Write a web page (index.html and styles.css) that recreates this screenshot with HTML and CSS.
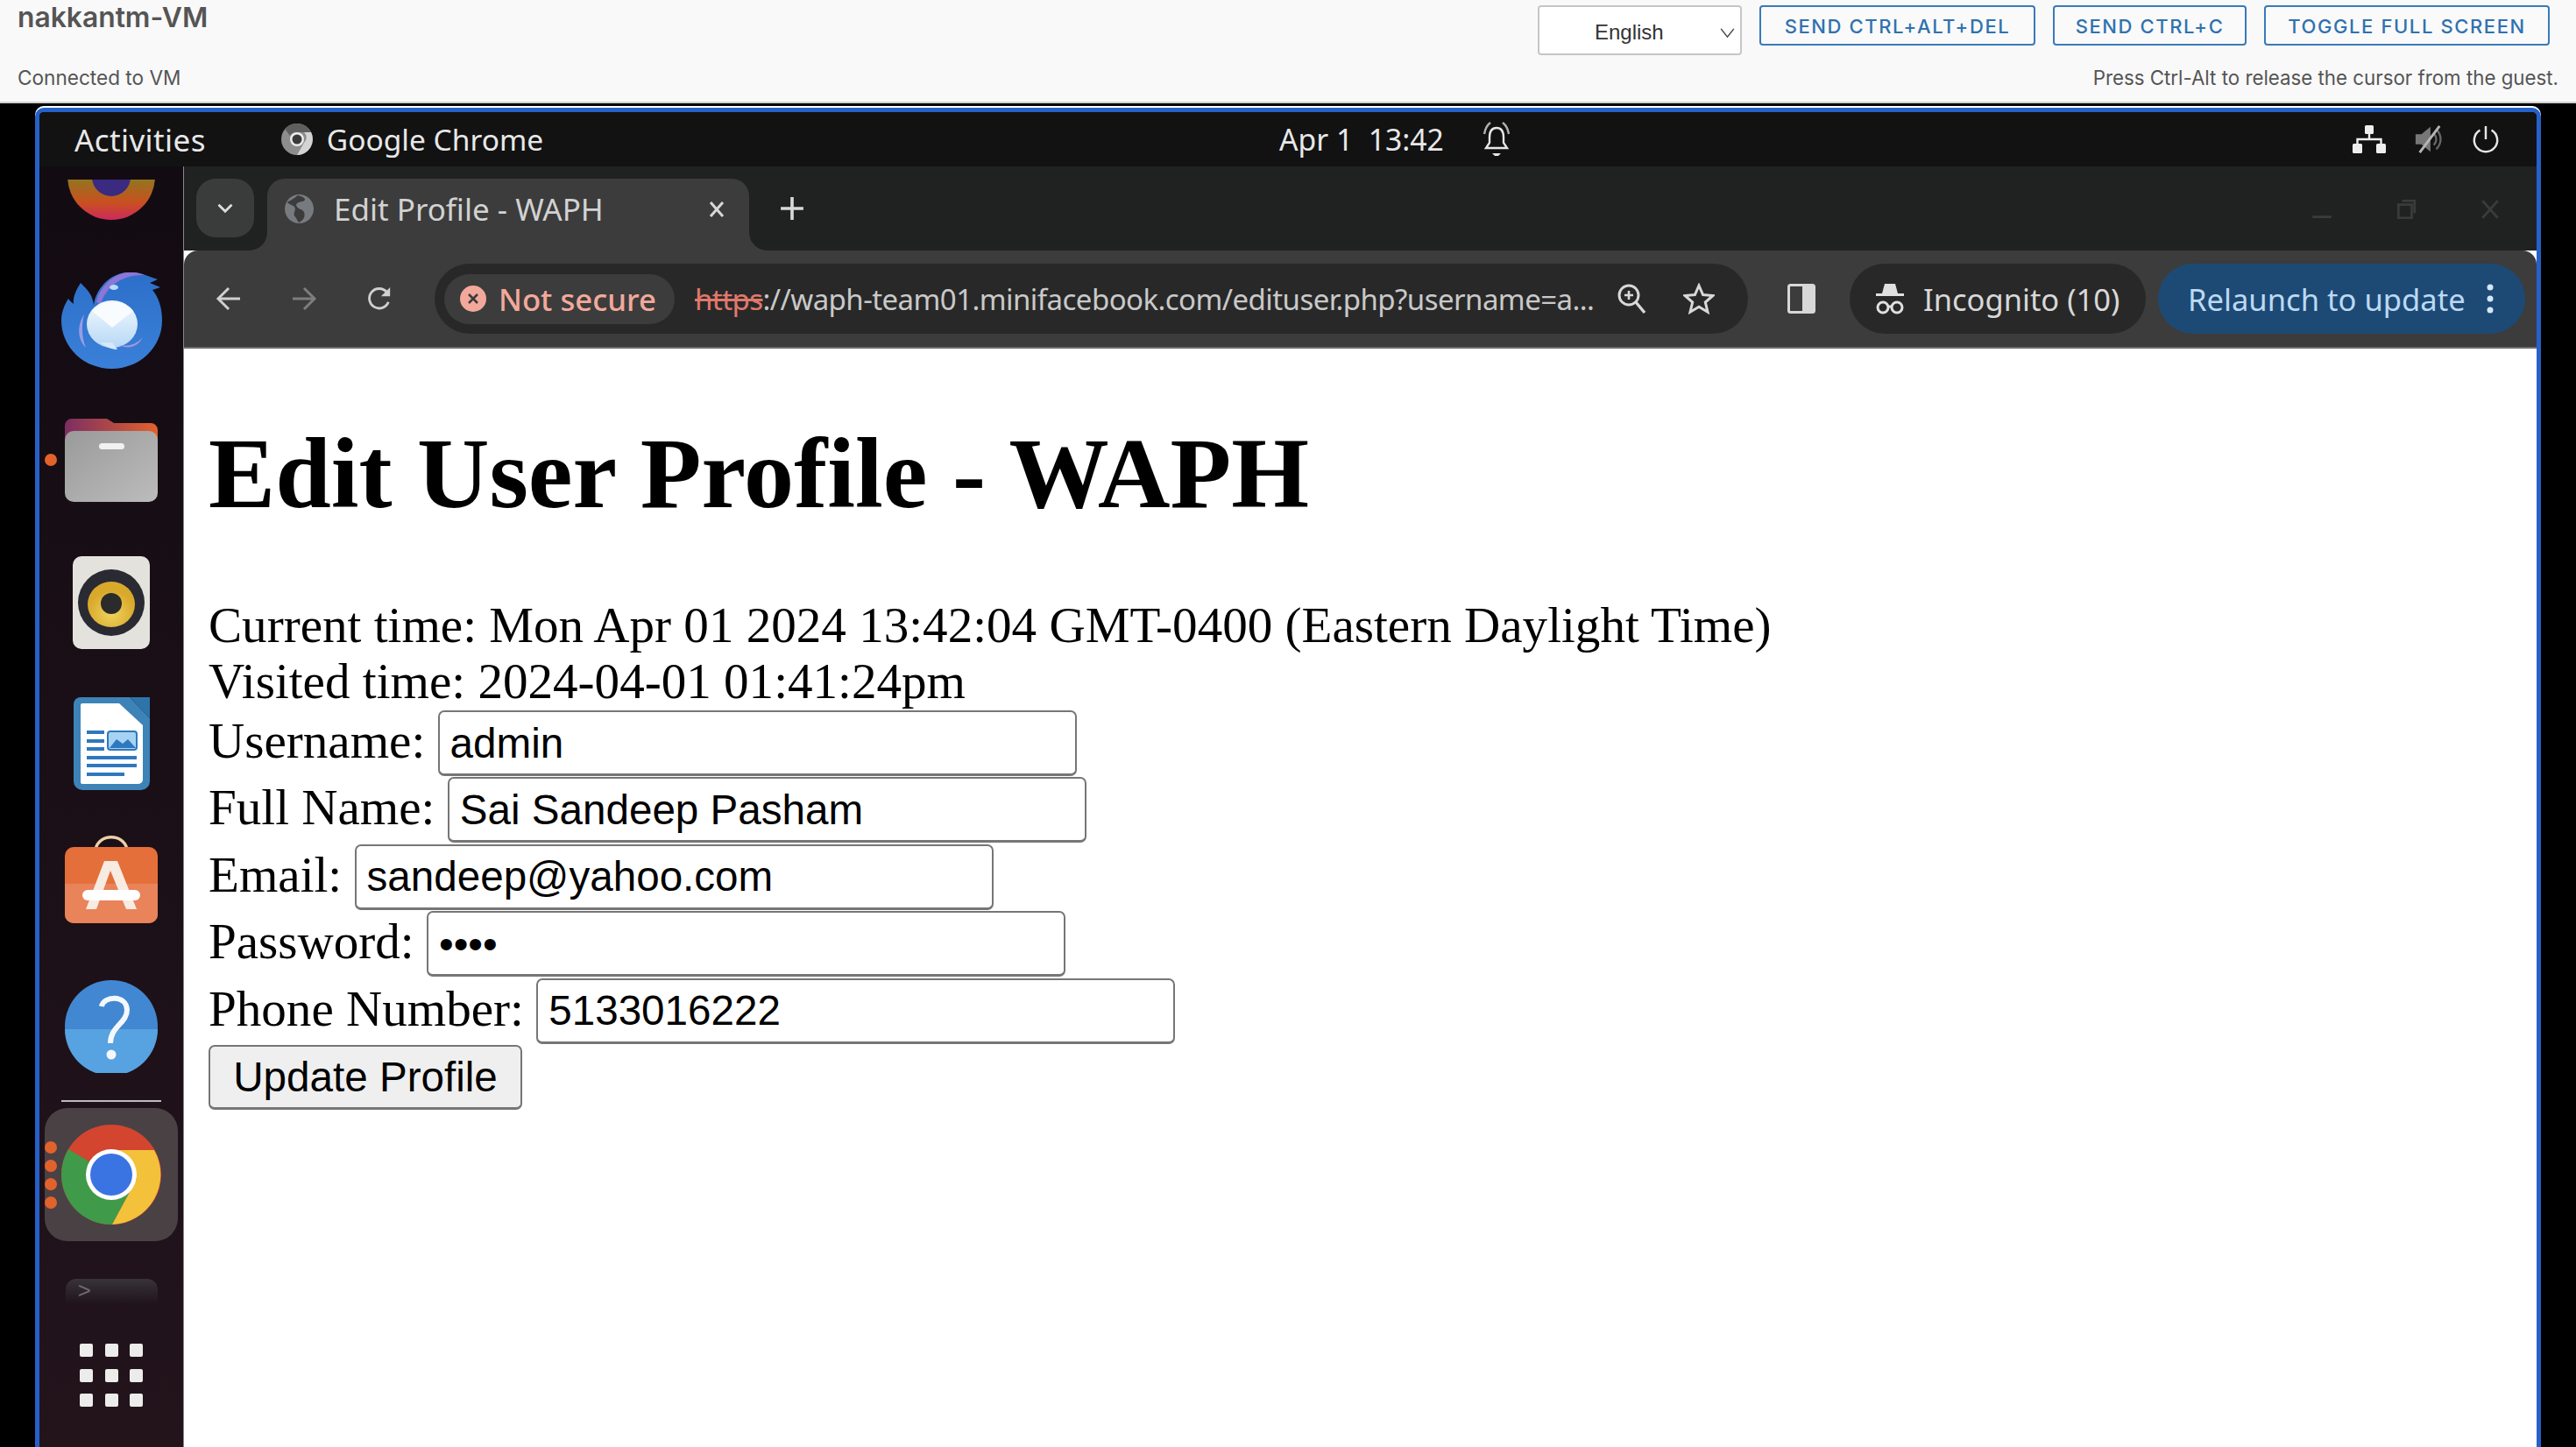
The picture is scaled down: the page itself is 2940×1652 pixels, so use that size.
FILE: index.html
```html
<!DOCTYPE html>
<html lang="en">
<head>
<meta charset="utf-8">
<title>Edit Profile - WAPH</title>
<link rel="stylesheet" href="styles.css">
</head>
<body>
<header class="vmbar">
  <div class="vm-info">
    <div class="vm-name">nakkantm-VM</div>
    <div class="vm-status">Connected to VM</div>
  </div>
  <div class="vm-side">
    <div class="vm-controls">
      <div class="lang-wrap">
        <select class="lang"><option>English</option></select>
        <svg class="lang-arrow" viewBox="0 0 18 12"><path d="M1 1l8 10 8-10" fill="none" stroke="#444" stroke-width="1.6"/></svg>
      </div>
      <button class="vm-btn vm-btn-a">SEND CTRL+ALT+DEL</button>
      <button class="vm-btn vm-btn-b">SEND CTRL+C</button>
      <button class="vm-btn vm-btn-c">TOGGLE FULL SCREEN</button>
    </div>
    <div class="vm-hint">Press Ctrl-Alt to release the cursor from the guest.</div>
  </div>
</header>

<div class="desktop">
  <div class="topbar">
    <div class="tb-left">
      <span class="tb-activities">Activities</span>
      <svg class="tb-chrome" viewBox="0 0 36 36">
        <circle cx="18" cy="18" r="18" fill="#8d8d8d"/>
        <path d="M18 0a18 18 0 0 1 16 10H18a8 8 0 0 0-8 4L4 6a18 18 0 0 1 14-6z" fill="#5f5f5f"/>
        <path d="M34 10a18 18 0 0 1-16 26l8-14a8 8 0 0 0 0-12z" fill="#d4d4d4"/>
        <circle cx="18" cy="18" r="8" fill="#ececec"/><circle cx="18" cy="18" r="5.5" fill="#3a3a3a"/>
      </svg>
      <span class="tb-app">Google Chrome</span>
    </div>
    <div class="tb-center">
      <span class="tb-clock">Apr 1&nbsp; 13:42</span>
      <svg class="tb-bell" viewBox="0 0 32 42" fill="none" stroke="#e6e6e6" stroke-width="2.4">
        <path d="M16 8c-6 0-8 5-8 11v6l-4 6h24l-4-6v-6c0-6-2-11-8-11z"/>
        <path d="M2 15C3 9 5 5 9 2M30 15C29 9 27 5 23 2" stroke="#b0b0b0"/>
        <path d="M11 37h10l-3 3h-4z" fill="#e6e6e6" stroke="none"/>
      </svg>
    </div>
    <div class="tb-right">
      <svg class="tb-net" viewBox="0 0 38 32"><g fill="#eee"><rect x="14" y="0" width="10" height="10" rx="1.5"/><rect x="0" y="21" width="11" height="11" rx="1.5"/><rect x="27" y="21" width="11" height="11" rx="1.5"/></g><path d="M19 10v6M5.500 21v-5h27v5" fill="none" stroke="#eee" stroke-width="2.400"/></svg>
      <svg class="tb-mute" viewBox="0 0 36 36"><path d="M2 12h7l11-9v30l-11-9H2z" fill="#777"/><path d="M24 11c4 4 4 10 0 14M27 6c7 7 7 17 0 24" fill="none" stroke="#666" stroke-width="2.500"/><path d="M31 2L7 34" stroke="#b5b5b5" stroke-width="3"/></svg>
      <svg class="tb-power" viewBox="0 0 34 36" fill="none" stroke="#e6e6e6" stroke-width="2.600"><path d="M17 2v16"/><path d="M10 7a14 14 0 1 0 14 0"/></svg>
    </div>
  </div>

  <div class="workspace">
    <nav class="dock">
      <div class="dock-item di-firefox">
        <svg class="ic-firefox" viewBox="0 0 100 100">
          <defs><linearGradient id="ffg" x1="0" y1="0.500" x2="0" y2="1"><stop offset="0" stop-color="#8a7b1f"/><stop offset="0.600" stop-color="#c9501f"/><stop offset="1" stop-color="#cc2a5c"/></linearGradient></defs>
          <circle cx="50" cy="50" r="50" fill="url(#ffg)"/><circle cx="50" cy="51" r="22" fill="#3a2a80"/>
        </svg>
      </div>
      <div class="dock-item di-bird">
        <svg viewBox="0 0 115 110" class="ic-bird">
          <defs>
            <linearGradient id="brd" x1="0" y1="0" x2="0" y2="1"><stop offset="0" stop-color="#2c6fca"/><stop offset="1" stop-color="#3a80d8"/></linearGradient>
            <linearGradient id="env" x1="0" y1="0" x2="0" y2="1"><stop offset="0" stop-color="#f4f9fe"/><stop offset="1" stop-color="#b7d8f6"/></linearGradient>
          </defs>
          <path d="M22 12C30 20 36 26 37 38 38 25 50 2 75 0c13-1 23 4 35 8l-9 4 12 5-9 3c8 10 11 22 11 35a57.500 55 0 0 1-115 0c0-9 3-17 8-25 2 3 4 4 6 6-1-8 3-16 8-24z" fill="url(#brd)"/>
          <path d="M40 34C43 18 58 2 75 0c9-1 15 1 20 3C72 2 52 14 45 36z" fill="#8c76d6"/>
          <path d="M26 48c-8 12-8 28 2 38-5-13-5-26-2-38z" fill="#9a9ce6"/>
          <ellipse cx="58" cy="59" rx="29" ry="27" fill="url(#env)"/>
          <path d="M35 44c8-12 38-14 47 0L58 63z" fill="#f9fcff"/>
          <path d="M44 80c8 6 14 8 20 8l-6-8z" fill="#d6e9fb"/>
          <ellipse cx="60" cy="17" rx="5" ry="3" fill="#b6dcf9"/>
          <path d="M66 83c11 2 20-1 27-9-4 9-15 15-27 9z" fill="#a795e0"/>
        </svg>
      </div>
      <div class="dock-item di-files">
        <span class="run-dot run-dot-files"></span>
        <svg viewBox="0 0 106 95" class="ic-files">
          <defs>
            <linearGradient id="fld" x1="0" x2="1"><stop offset="0" stop-color="#7c2e62"/><stop offset="1" stop-color="#e2622c"/></linearGradient>
            <linearGradient id="flb" x1="0" y1="0" x2="1" y2="1"><stop offset="0" stop-color="#9a9a9a"/><stop offset="1" stop-color="#bcbcbc"/></linearGradient>
          </defs>
          <path d="M8 0h40l8 5h42a8 8 0 0 1 8 8v30H0V8a8 8 0 0 1 8-8z" fill="url(#fld)"/>
          <rect y="14" width="106" height="81" rx="10" fill="url(#flb)"/>
          <rect x="39" y="28" width="29" height="7" rx="3.500" fill="#f1f1f1"/>
        </svg>
      </div>
      <div class="dock-item di-rhythm">
        <svg viewBox="0 0 88 106" class="ic-rhythm">
          <defs><radialGradient id="spk" cy="0.700"><stop offset="0" stop-color="#f0d45e"/><stop offset="1" stop-color="#d9a92c"/></radialGradient></defs>
          <rect width="88" height="106" rx="10" fill="#e4e2dc"/>
          <circle cx="44" cy="53" r="38" fill="#2a2a33"/>
          <ellipse cx="44" cy="55" rx="27" ry="26" fill="url(#spk)"/>
          <circle cx="44" cy="54" r="12" fill="#2b2b2b"/>
        </svg>
      </div>
      <div class="dock-item di-writer">
        <svg viewBox="0 0 87 106" class="ic-writer">
          <path d="M8 0h56l23 24v72a10 10 0 0 1-10 10H10A10 10 0 0 1 0 96V8a8 8 0 0 1 8-8z" fill="#3d83b8"/>
          <path d="M64 0h23v24z" fill="#2d74aa"/>
          <path d="M10 7h42l27 25v62a5 5 0 0 1-5 5H10a2 2 0 0 1-2-2V9a2 2 0 0 1 2-2z" fill="#fff"/>
          <g fill="#2f78bd"><rect x="15" y="38" width="20" height="4"/><rect x="15" y="48" width="20" height="4"/><rect x="15" y="57" width="20" height="4"/><rect x="15" y="67" width="57" height="4"/><rect x="15" y="76" width="57" height="4"/><rect x="15" y="86" width="43" height="4"/></g>
          <rect x="39" y="39" width="33" height="21" rx="3" fill="#a6d3f2" stroke="#2f78bd" stroke-width="2"/>
          <path d="M41 58l8-10 7 5 6-5 9 10z" fill="#2f78bd"/>
        </svg>
      </div>
      <div class="dock-item di-soft">
        <svg viewBox="0 0 106 100" class="ic-soft">
          <path d="M35 16c3-19 33-19 36 0" fill="none" stroke="#ecd0a7" stroke-width="3.500"/>
          <rect y="13" width="106" height="87" rx="10" fill="#e56f3a"/>
          <path d="M0 55h106v35a10 10 0 0 1-10 10H10A10 10 0 0 1 0 90z" fill="#e8835a"/>
          <path d="M24 84L45 29h15l22 55H70L52 40 36 84z" fill="#f7ebe2"/>
          <rect x="20" y="62" width="66" height="12" rx="6" fill="#fff"/>
        </svg>
      </div>
      <div class="dock-item di-help">
        <svg viewBox="0 0 106 106" class="ic-help">
          <circle cx="53" cy="53" r="53" fill="#4287d2"/>
          <path d="M0 56h106a53 53 0 0 1-106 0z" fill="#57a2e0"/>
          <path d="M42 30c2-12 28-14 29 4 0 15-19 19-19 38" fill="none" stroke="#f4f8fc" stroke-width="6"/>
          <circle cx="53" cy="85" r="5.500" fill="#f4f8fc"/>
        </svg>
      </div>
      <div class="dock-sep"></div>
      <div class="dock-item di-chrome">
        <span class="run-dots"><i></i><i></i><i></i><i></i></span>
        <svg viewBox="0 0 114 114" class="ic-chrome">
          <circle cx="57" cy="57" r="57" fill="#d3452f"/>
          <path d="M57 57L8 28A57 57 0 0 0 58 114L86 62z" fill="#3f9a49"/>
          <path d="M57 29h49a57 57 0 0 1-48 85L86 62z" fill="#f3c13a"/>
          <circle cx="57" cy="57" r="29" fill="#fff"/>
          <circle cx="57" cy="57" r="24" fill="#3a74e3"/>
        </svg>
      </div>
      <div class="dock-item di-term">
        <span class="term-glyph">&gt;</span>
      </div>
      <div class="dock-grid">
        <i></i><i></i><i></i><i></i><i></i><i></i><i></i><i></i><i></i>
      </div>
    </nav>

    <div class="browser">
      <div class="tabstrip">
        <div class="tab-search">
          <svg viewBox="0 0 16 10" class="ic-chev"><path d="M2 2l6 6 6-6" fill="none" stroke="#dcdcdc" stroke-width="2.200"/></svg>
        </div>
        <div class="tab">
          <svg viewBox="0 0 34 34" class="ic-globe"><circle cx="17" cy="17" r="17" fill="#777b80"/><path d="M15 1c-5 5-9 6-12 8 3 4 8 3 9 7s-3 6 0 10 3 6 5 7c5-3 7-6 6-11s-7-4-9-8 3-5 8-6c3-1 3-5-7-7z" fill="#3c3c3c"/></svg>
          <span class="tab-title">Edit Profile - WAPH</span>
          <svg viewBox="0 0 18 20" class="ic-close"><path d="M2 2l14 16M16 2L2 18" stroke="#d8d8d8" stroke-width="3"/></svg>
        </div>
        <svg viewBox="0 0 26 26" class="ic-plus"><path d="M13 1v24M1 13h24" stroke="#d8d8d8" stroke-width="3.400"/></svg>
        <div class="win-controls">
          <svg viewBox="0 0 24 24" class="ic-win"><path d="M2 20h20" stroke="#3a3c3c" stroke-width="2.500"/></svg>
          <svg viewBox="0 0 24 24" class="ic-win"><path d="M4 7h14v14H4zM8 3h13v13" fill="none" stroke="#3a3c3c" stroke-width="2.500"/></svg>
          <svg viewBox="0 0 24 24" class="ic-win"><path d="M4 3l16 18M20 3L4 21" stroke="#3a3c3c" stroke-width="2.500"/></svg>
        </div>
      </div>

      <div class="toolbar">
        <svg viewBox="0 0 30 30" class="ic-nav"><path d="M28 15H4M15 3L3 15l12 12" fill="none" stroke="#d0d0d0" stroke-width="3"/></svg>
        <svg viewBox="0 0 30 30" class="ic-nav"><path d="M2 15h24M15 3l12 12-12 12" fill="none" stroke="#7d7d7d" stroke-width="3"/></svg>
        <svg viewBox="0 0 30 32" class="ic-nav"><path d="M26 20a12 12 0 1 1-2-12" fill="none" stroke="#d0d0d0" stroke-width="3"/><path d="M28 2v11H17z" fill="#d0d0d0"/></svg>
        <div class="omnibox">
          <div class="chip">
            <svg viewBox="0 0 30 30" class="ic-warn"><circle cx="15" cy="15" r="15" fill="#f2a99b"/><path d="M10 10l10 10M20 10L10 20" stroke="#3c3c3c" stroke-width="2.600"/></svg>
            <span class="chip-text">Not secure</span>
          </div>
          <div class="url"><span class="url-scheme">https</span>://waph-team01.minifacebook.com/edituser.php?username=a...</div>
          <svg viewBox="0 0 34 36" class="ic-zoom"><circle cx="14" cy="14" r="11" fill="none" stroke="#d8d8d8" stroke-width="3"/><path d="M22 22l10 12" stroke="#d8d8d8" stroke-width="3.400"/><path d="M14 9v10M9 14h10" stroke="#d8d8d8" stroke-width="2.600"/></svg>
          <svg viewBox="0 0 36 36" class="ic-star"><path d="M18 3l4.600 10.500 11.400 1-8.700 7.500 2.700 11.200L18 27.300 8 33.200l2.700-11.200L2 14.500l11.400-1z" fill="none" stroke="#d8d8d8" stroke-width="3"/></svg>
        </div>
        <svg viewBox="0 0 32 34" class="ic-panel"><rect x="1.500" y="1.500" width="29" height="31" rx="2" fill="none" stroke="#d8d8d8" stroke-width="3"/><rect x="17" y="2" width="13" height="30" fill="#d8d8d8"/></svg>
        <div class="pill-incog">
          <svg viewBox="0 0 36 38" class="ic-incog"><path d="M12 2h12l3 11h7v3H2v-3h7z" fill="#e0e0e0"/><circle cx="10" cy="29" r="6" fill="none" stroke="#e0e0e0" stroke-width="3"/><circle cx="26" cy="29" r="6" fill="none" stroke="#e0e0e0" stroke-width="3"/><path d="M16 28h4" stroke="#e0e0e0" stroke-width="3"/></svg>
          <span class="incog-text">Incognito (10)</span>
        </div>
        <div class="pill-relaunch">
          <span class="relaunch-text">Relaunch to update</span>
          <svg viewBox="0 0 8 34" class="ic-dots"><circle cx="4" cy="4" r="3.500" fill="#d5e6f7"/><circle cx="4" cy="17" r="3.500" fill="#d5e6f7"/><circle cx="4" cy="30" r="3.500" fill="#d5e6f7"/></svg>
        </div>
      </div>

      <main class="page">
        <h1 class="page-title">Edit User Profile - WAPH</h1>
        <div class="line">Current time: Mon Apr 01 2024 13:42:04 GMT-0400 (Eastern Daylight Time)</div>
        <div class="line">Visited time: 2024-04-01 01:41:24pm</div>
        <form class="profile">
          <div class="row"><label>Username: </label><input class="field" type="text" value="admin"></div>
          <div class="row"><label>Full Name: </label><input class="field" type="text" value="Sai Sandeep Pasham"></div>
          <div class="row"><label>Email: </label><input class="field" type="text" value="sandeep@yahoo.com"></div>
          <div class="row"><label>Password: </label><input class="field" type="password" value="1234"></div>
          <div class="row"><label>Phone Number: </label><input class="field" type="text" value="5133016222"></div>
          <button class="submit" type="button">Update Profile</button>
        </form>
      </main>
    </div>
  </div>
</div>
</body>
</html>
```

FILE: styles.css
```css
* { box-sizing: border-box; }
html, body { margin: 0; height: 100%; }
body {
  width: 2940px;
  height: 1652px;
  overflow: hidden;
  background: #000;
  display: flex;
  flex-direction: column;
}

/* VM console bar */
.vmbar {
  height: 118px;
  flex: none;
  background: #f9f9f9;
  border-bottom: 2px solid #cfcfcf;
  display: flex;
  justify-content: space-between;
  font-family: Inter, "Noto Sans", sans-serif;
  color: #565656;
}
.vm-info { padding-left: 20px; }
.vm-name { font-size: 31.800px; font-weight: 600; line-height: 40px; height: 76px; color: #555; }
.vm-status { font-size: 22.600px; line-height: 26px; color: #555; }
.vm-side { padding: 6px 30px 0 0; display: flex; flex-direction: column; align-items: flex-end; }
.vm-controls { display: flex; align-items: flex-start; gap: 20px; }
.lang-wrap { position: relative; width: 233px; height: 57px; }
.lang {
  appearance: none;
  width: 100%;
  height: 100%;
  border: 2px solid #c6c6c6;
  border-radius: 4px;
  background: #fff;
  padding: 3px 0 0 63px;
  font: 24px "Liberation Sans", Arial, sans-serif;
  color: #333;
}
.lang-arrow { position: absolute; left: 208px; top: 26px; width: 17px; height: 11px; }
.vm-btn {
  height: 46px;
  border: 2px solid #3a7ab8;
  border-radius: 4px;
  background: #fafafa;
  color: #2f72b0;
  font: 500 22px Inter, "Noto Sans", sans-serif;
  letter-spacing: 1.600px;
  padding: 2px 0 0;
}
.vm-btn-a { width: 315px; }
.vm-btn-b { width: 221px; }
.vm-btn-c { width: 326px; }
.vm-hint { font-size: 22.300px; line-height: 26px; margin: 13px -10px 0 0; color: #555; }

/* Guest desktop */
.desktop {
  margin: 5px 40px 0;
  flex: 1;
  min-height: 0;
  border: 5px solid #2561c9;
  border-bottom: 0;
  border-top-left-radius: 10px;
  border-top-right-radius: 10px;
  box-shadow: 0 -2px 0 #fff;
  display: flex;
  flex-direction: column;
  overflow: hidden;
  background: #111;
}
.topbar {
  height: 62px;
  flex: none;
  background: #121212;
  display: grid;
  grid-template-columns: 1415px 1fr auto;
  align-items: center;
  font-family: "Noto Sans", sans-serif;
  color: #e8e8e8;
}
.tb-left { display: flex; align-items: center; padding-left: 40px; }
.tb-activities { font-size: 35px; letter-spacing: 0.400px; }
.tb-chrome { width: 36px; height: 38px; margin-left: 86px; }
.tb-app { font-size: 33.500px; margin-left: 16px; }
.tb-center { display: flex; align-items: center; }
.tb-clock { font-size: 33.700px; }
.tb-bell { width: 32px; height: 42px; margin-left: 44px; }
.tb-right { display: flex; align-items: center; padding-right: 42px; gap: 32px; }
.tb-net { width: 38px; height: 32px; }
.tb-mute { width: 34px; height: 34px; }
.tb-power { width: 32px; height: 36px; }

.workspace { flex: 1; min-height: 0; display: flex; }

/* Dock */
.dock {
  width: 165px;
  flex: none;
  background: linear-gradient(#130b12, #23141c);
  border-right: 1px solid #888;
  padding-top: 15px;
  display: flex;
  flex-direction: column;
  align-items: center;
  overflow: hidden;
}
.dock-item { position: relative; display: flex; justify-content: center; flex: none; }
.dock-item svg { display: block; }
.di-firefox { height: 46px; width: 100px; overflow: hidden; align-items: flex-end; }
.ic-firefox { width: 100px; height: 100px; flex: none; }
.di-bird { margin-top: 60px; }
.ic-bird { width: 115px; height: 110px; }
.di-files { margin-top: 57px; }
.ic-files { width: 106px; height: 95px; }
.di-rhythm { margin-top: 62px; }
.ic-rhythm { width: 88px; height: 106px; }
.di-writer { margin-top: 55px; }
.ic-writer { width: 87px; height: 106px; }
.di-soft { margin-top: 52px; }
.ic-soft { width: 106px; height: 100px; }
.di-help { margin-top: 65px; }
.ic-help { width: 106px; height: 106px; }
.dock-sep { width: 114px; height: 2px; background: #bcbcbc; margin-top: 31px; flex: none; }
.di-chrome {
  margin-top: 7px;
  width: 152px;
  height: 152px;
  border-radius: 26px;
  background: #4a4145;
  align-items: center;
}
.ic-chrome { width: 114px; height: 114px; }
.run-dot, .run-dots i { display: block; width: 14px; height: 14px; border-radius: 50%; background: #e2622c; }
.run-dot-files { position: absolute; left: -23px; top: 40px; }
.run-dots { position: absolute; left: 0; top: 38px; display: flex; flex-direction: column; gap: 7px; }
.di-term {
  margin-top: 43px;
  width: 105px;
  height: 28px;
  border-radius: 12px 12px 0 0;
  background: linear-gradient(#38333a, #21141c);
  justify-content: flex-start;
  padding-left: 14px;
}
.term-glyph { font: 26px/30px "Liberation Mono", monospace; color: #6e6a6e; }
.dock-grid {
  margin-top: 46px;
  width: 72px;
  display: grid;
  grid-template-columns: repeat(3, 15px);
  grid-auto-rows: 15px;
  justify-content: space-between;
  row-gap: 13.500px;
  flex: none;
}
.dock-grid i { display: block; background: #ececea; border-radius: 2px; }

/* Browser chrome */
.browser { flex: 1; min-width: 0; display: flex; flex-direction: column; background: #fff; }
.tabstrip {
  height: 96px;
  flex: none;
  background: #202222;
  display: flex;
  padding: 14px 0 0 14px;
  font-family: "Noto Sans", sans-serif;
}
.tab-search {
  width: 66px;
  height: 67px;
  border-radius: 22px;
  background: #3a3b3b;
  display: flex;
  align-items: center;
  justify-content: center;
}
.ic-chev { width: 20px; height: 13px; }
.tab {
  position: relative;
  width: 550px;
  height: 82px;
  margin-left: 15px;
  background: #3c3c3c;
  border-radius: 20px 20px 0 0;
  display: flex;
  align-items: flex-start;
  padding: 18px 0 0 20px;
}
.tab::before, .tab::after {
  content: "";
  position: absolute;
  bottom: 0;
  width: 20px;
  height: 20px;
}
.tab::before { left: -20px; background: radial-gradient(circle at 0 0, transparent 19.500px, #3c3c3c 20px); }
.tab::after { right: -20px; background: radial-gradient(circle at 100% 0, transparent 19.500px, #3c3c3c 20px); }
.ic-globe { width: 33px; height: 33px; flex: none; }
.tab-title { font-size: 35px; line-height: 34px; color: #d2d2d2; margin-left: 23px; width: 428px; white-space: nowrap; }
.ic-close { width: 18px; height: 22px; margin-top: 6px; }
.ic-plus { width: 28px; height: 28px; margin: 20px 0 0 35px; }
.win-controls { margin-left: auto; display: flex; gap: 70px; padding: 22px 40px 0 0; }
.ic-win { width: 26px; height: 26px; }

.toolbar {
  height: 112px;
  flex: none;
  background: #3c3c3c;
  border-radius: 16px 16px 0 0;
  border-bottom: 2px solid #6c6c6c;
  display: flex;
  align-items: center;
  padding: 0 0 0 36px;
  font-family: "Noto Sans", sans-serif;
}
.ic-nav { width: 30px; height: 30px; flex: none; margin-right: 56px; }
.omnibox {
  width: 1499px;
  height: 80px;
  margin-left: -8px;
  border-radius: 40px;
  background: #282828;
  display: flex;
  align-items: center;
  padding-left: 11px;
  flex: none;
}
.chip {
  width: 263px;
  height: 57px;
  border-radius: 29px;
  background: #3c3c3c;
  display: flex;
  align-items: center;
  padding-left: 18px;
  flex: none;
}
.ic-warn { width: 30px; height: 30px; }
.chip-text { font-size: 34.700px; font-weight: 500; color: #f2a99b; margin-left: 14px; white-space: nowrap; }
.url { font-size: 33px; letter-spacing: -0.560px; color: #c9c9c9; margin-left: 23px; width: 1027px; white-space: nowrap; }
.url-scheme { color: #e0786c; text-decoration: line-through; }
.ic-zoom { width: 34px; height: 36px; margin-left: 25px; flex: none; }
.ic-star { width: 36px; height: 36px; margin-left: 42px; flex: none; }
.ic-panel { width: 32px; height: 34px; margin-left: 45px; flex: none; }
.pill-incog {
  width: 338px;
  height: 80px;
  margin-left: 39px;
  border-radius: 40px;
  background: #282828;
  display: flex;
  align-items: center;
  padding-left: 28px;
  flex: none;
}
.ic-incog { width: 36px; height: 38px; }
.incog-text { font-size: 34.500px; color: #d8d8d8; margin-left: 20px; white-space: nowrap; }
.pill-relaunch {
  width: 419px;
  height: 80px;
  margin-left: 14px;
  border-radius: 40px;
  background: #1d4a75;
  display: flex;
  align-items: center;
  padding-left: 34px;
  flex: none;
}
.relaunch-text { font-size: 34.600px; color: #bcd9f3; width: 341px; white-space: nowrap; }
.ic-dots { width: 8px; height: 34px; }

/* Page content */
.page {
  flex: 1;
  min-height: 0;
  background: #fff;
  color: #000;
  padding-left: 28px;
  font: 57.100px "Liberation Serif", "Times New Roman", serif;
  overflow: hidden;
}
.page-title { font-size: 114.200px; font-weight: 700; margin: 78px 0 77px; line-height: 129px; }
.line { line-height: 64px; }
.profile { padding-top: 1px; }
.row { line-height: 64px; height: 76.400px; white-space: nowrap; }
.field {
  width: 729px;
  height: 75px;
  border: 2px solid #767676;
  border-bottom-width: 3px;
  border-radius: 7px;
  padding: 0 12px;
  background: #fff;
  color: #000;
  font: 47.600px "Liberation Sans", Arial, sans-serif;
}
.submit {
  display: block;
  width: 358px;
  height: 74px;
  padding: 0;
  border: 2px solid #767676;
  border-bottom-width: 3px;
  border-radius: 7px;
  background: #efefef;
  color: #000;
  font: 47.600px "Liberation Sans", Arial, sans-serif;
}
```
